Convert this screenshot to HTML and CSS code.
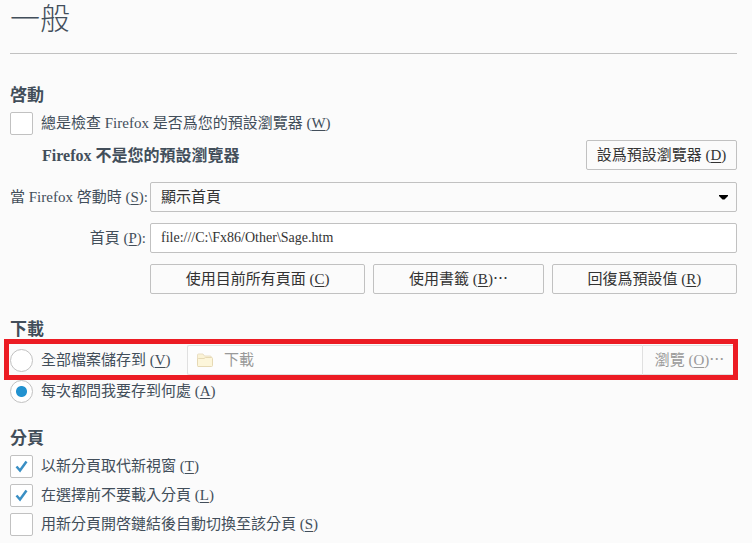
FILE: index.html
```html
<!DOCTYPE html>
<html lang="zh-Hant">
<head>
  <meta charset="UTF-8" />
  <meta name="viewport" content="width=device-width, initial-scale=1.0"/>
  <title>一般</title>
  <link rel="stylesheet" href="styles.css">
</head>
<body>

<main class="pane">
  <h1>一般</h1>

  <section>
    <h2>啓動</h2>
    <label class="option"><input type="checkbox"> <span>總是檢查 Firefox 是否爲您的預設瀏覽器 (<u>W</u>)</span></label>
    <div class="default-browser">
      <strong>Firefox 不是您的預設瀏覽器</strong>
      <button type="button" class="btn btn-default">設爲預設瀏覽器 (<u>D</u>)</button>
    </div>
    <div class="startup">
      <label for="startup-page">當 Firefox 啓動時 (<u>S</u>):</label>
      <div class="select-wrap">
        <select id="startup-page" class="field">
          <option>顯示首頁</option>
        </select>
        <svg class="arrow" width="9" height="5" viewBox="0 0 9 5"><path d="M0 0H9V1L5.500 4.500H3.500L0 1Z" fill="#000"/></svg>
      </div>
      <label for="home-page">首頁 (<u>P</u>):</label>
      <input id="home-page" class="field" type="text" value="file:///C:\Fx86/Other\Sage.htm">
      <div class="home-buttons">
        <button type="button" class="btn">使用目前所有頁面 (<u>C</u>)</button>
        <button type="button" class="btn">使用書籤 (<u>B</u>)<span class="dots">⋯</span></button>
        <button type="button" class="btn">回復爲預設值 (<u>R</u>)</button>
      </div>
    </div>
  </section>

  <section>
    <h2>下載</h2>
    <div class="save-to">
      <label class="option"><input type="radio" name="download"> <span>全部檔案儲存到 (<u>V</u>)</span></label>
      <div class="folder">
        <svg width="18" height="16" viewBox="0 0 18 16">
          <path d="M1.500 13V3Q1.500 2 2.500 2H7L8.500 4H14Q15.500 4 15.500 5.500V13Z" fill="#fbf3d6" stroke="#eadfc4"/>
          <path d="M2 14.500Q1.500 14.500 1.500 13.500V7Q1.500 6.500 2.500 6.500H8L9.500 5.500H15.500Q16.500 5.500 16.500 6.500V13.500Q16.500 14.500 15.500 14.500Z" fill="#fdf6da" stroke="#e6d9b4"/>
        </svg>
        <input type="text" value="下載" aria-label="下載資料夾" disabled>
      </div>
      <button type="button" class="btn btn-browse" disabled>瀏覽 (<u>O</u>)<span class="dots">⋯</span></button>
    </div>
    <label class="option"><input type="radio" name="download" checked> <span>每次都問我要存到何處 (<u>A</u>)</span></label>
  </section>

  <section class="tabs">
    <h2>分頁</h2>
    <label class="option"><input type="checkbox" checked> <span>以新分頁取代新視窗 (<u>T</u>)</span></label>
    <label class="option"><input type="checkbox" checked> <span>在選擇前不要載入分頁 (<u>L</u>)</span></label>
    <label class="option"><input type="checkbox"> <span>用新分頁開啓鏈結後自動切換至該分頁 (<u>S</u>)</span></label>
  </section>
</main>

</body>
</html>
```
FILE: styles.css
```css
* {
  box-sizing: border-box;
}

body {
  margin: 0;
  background: #fbfbfb;
  color: #424e5a;
  font-family: 'Liberation Serif', 'Noto Sans CJK TC', serif;
  font-size: 15px;
  line-height: 23px;
}

.pane {
  padding: 0 15px 0 10px;
}

h1 {
  margin: 0 0 30px;
  padding-bottom: 15px;
  border-bottom: 1px solid #c1c1c1;
  font-size: 30px;
  font-weight: 300;
  line-height: 38px;
}

h2 {
  margin: 24px 0 4px;
  font-size: 17px;
  line-height: 24px;
}

u {
  text-underline-offset: 2px;
}

.option {
  display: flex;
  align-items: center;
  gap: 8px;
}

.option input {
  appearance: none;
  flex: none;
  width: 23px;
  height: 23px;
  margin: 0;
  background: #fff center no-repeat;
  border: 1px solid #c1c1c1;
  border-radius: 2px;
}

.option input[type="radio"] {
  border-radius: 50%;
}

.option input[type="radio"]:checked {
  background-image: radial-gradient(circle, #2292d0 5px, transparent 6px);
}

.option input[type="checkbox"]:checked {
  background-image: url("data:image/svg+xml,%3Csvg xmlns='http://www.w3.org/2000/svg' width='13' height='13'%3E%3Cpath d='M1.500 6.500L5 10.500L11.500 1.500' fill='none' stroke='%233a8fc4' stroke-width='2.500'/%3E%3C/svg%3E");
}

.btn,
.field {
  height: 30px;
  border: 1px solid #c1c1c1;
  border-radius: 2px;
  background: #fbfbfb;
  color: #333;
  font: inherit;
}

.btn {
  padding: 0 8px;
  white-space: nowrap;
}

.dots {
  font-family: 'Noto Sans CJK TC', sans-serif;
  line-height: 1;
}

.default-browser {
  display: flex;
  align-items: center;
  justify-content: space-between;
  margin: 5px 0 12px;
  padding-left: 32px;
  font-size: 16px;
}

.btn-default {
  width: 151px;
  font-size: 15px;
}

.startup {
  display: grid;
  grid-template-columns: 136px 1fr;
  gap: 11px 4px;
  align-items: center;
}

.startup > label {
  text-align: right;
  white-space: nowrap;
}

.select-wrap {
  position: relative;
}

.field {
  display: block;
  width: 100%;
  padding: 0 10px;
}

input.field {
  background: #fff;
  font-size: 14px;
}

select.field {
  appearance: none;
}

.arrow {
  position: absolute;
  top: 13px;
  right: 9px;
  pointer-events: none;
}

.home-buttons {
  grid-column: 2;
  display: flex;
  gap: 8px;
}

.home-buttons .btn {
  flex: 1 1 auto;
}

.save-to {
  position: relative;
  display: flex;
  align-items: center;
  margin: -1px 0 5px;
}

/* red highlight around the whole row */
.save-to::after {
  content: "";
  position: absolute;
  inset: -6px -1px -5px -6px;
  border: 5px solid #ec1c24;
  pointer-events: none;
}

.save-to .option {
  flex: 0 0 177px;
}

.folder {
  display: flex;
  flex: 1;
  align-items: center;
  gap: 10px;
  height: 30px;
  padding-left: 8px;
  background: #fdfdfd;
  border: 1px solid #e0e0e0;
  border-right: 0;
  border-radius: 2px 0 0 2px;
}

.folder input {
  flex: 1;
  min-width: 0;
  padding: 0;
  border: 0;
  background: none;
  color: #999;
  font: inherit;
}

.btn-browse {
  width: 95px;
  border-color: #e0e0e0;
  border-radius: 0 2px 2px 0;
  color: #999;
}

.tabs .option + .option {
  margin-top: 6px;
}
```
